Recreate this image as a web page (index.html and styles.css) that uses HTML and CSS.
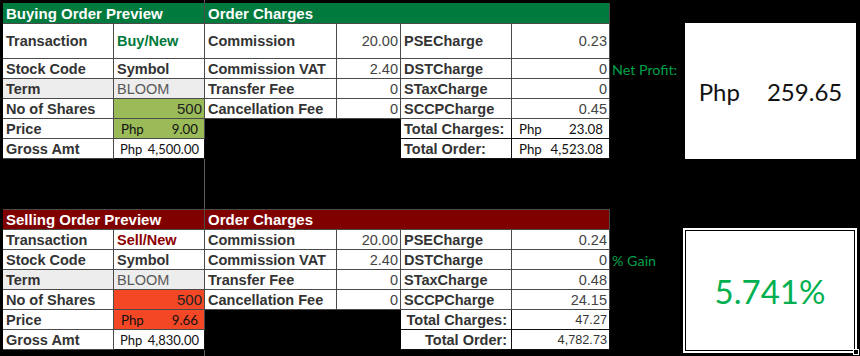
FILE: index.html
```html
<!DOCTYPE html>
<html>
<head>
<meta charset="utf-8">
<link rel="stylesheet" href="styles.css">
</head>
<body>
<div class="sheet">
  <div class="block buy">
    <div class="c hdr span2">Buying Order Preview</div>
    <div class="c hdr span4">Order Charges</div>
    <div class="blank span2"></div>

    <div class="c lbl">Transaction</div>
    <div class="c lbl buy-txt">Buy/New</div>
    <div class="c lbl">Commission</div>
    <div class="c num">20.00</div>
    <div class="c lbl">PSECharge</div>
    <div class="c num">0.23</div>
    <div class="blank"></div>
    <div class="result"><span>Php</span><span>259.65</span></div>

    <div class="c lbl">Stock Code</div>
    <div class="c lbl">Symbol</div>
    <div class="c lbl">Commission VAT</div>
    <div class="c num">2.40</div>
    <div class="c lbl">DSTCharge</div>
    <div class="c num">0</div>
    <div class="note">Net Profit:</div>

    <div class="c lbl grey">Term</div>
    <div class="c plain grey">BLOOM</div>
    <div class="c lbl">Transfer Fee</div>
    <div class="c num">0</div>
    <div class="c lbl">STaxCharge</div>
    <div class="c num">0</div>
    <div class="blank"></div>

    <div class="c lbl">No of Shares</div>
    <div class="c num fill-g dark-txt">500</div>
    <div class="c lbl">Cancellation Fee</div>
    <div class="c num">0</div>
    <div class="c lbl">SCCPCharge</div>
    <div class="c num">0.45</div>
    <div class="blank"></div>

    <div class="c lbl">Price</div>
    <div class="c acct fill-g"><span>Php</span><span>9.00</span></div>
    <div class="blank hole"></div>
    <div class="c lbl dark-b">Total Charges:</div>
    <div class="c acct dark-b"><span>Php</span><span>23.08</span></div>
    <div class="blank"></div>

    <div class="c lbl">Gross Amt</div>
    <div class="c acct tight dark-b"><span>Php</span><span>4,500.00</span></div>
    <div class="c lbl dark-b">Total Order:</div>
    <div class="c acct dark-b"><span>Php</span><span>4,523.08</span></div>
    <div class="blank"></div>
  </div>

  <div class="block sell">
    <div class="c hdr red span2">Selling Order Preview</div>
    <div class="c hdr red span4">Order Charges</div>
    <div class="blank span2"></div>

    <div class="c lbl">Transaction</div>
    <div class="c lbl sell-txt">Sell/New</div>
    <div class="c lbl">Commission</div>
    <div class="c num">20.00</div>
    <div class="c lbl">PSECharge</div>
    <div class="c num">0.24</div>
    <div class="blank"></div>
    <div class="result gain"><span>5.741%</span><i class="handle"></i></div>

    <div class="c lbl">Stock Code</div>
    <div class="c lbl">Symbol</div>
    <div class="c lbl">Commission VAT</div>
    <div class="c num">2.40</div>
    <div class="c lbl">DSTCharge</div>
    <div class="c num">0</div>
    <div class="note">% Gain</div>

    <div class="c lbl grey">Term</div>
    <div class="c plain grey">BLOOM</div>
    <div class="c lbl">Transfer Fee</div>
    <div class="c num">0</div>
    <div class="c lbl">STaxCharge</div>
    <div class="c num">0.48</div>
    <div class="blank"></div>

    <div class="c lbl">No of Shares</div>
    <div class="c num fill-r dark-txt">500</div>
    <div class="c lbl">Cancellation Fee</div>
    <div class="c num">0</div>
    <div class="c lbl">SCCPCharge</div>
    <div class="c num">24.15</div>
    <div class="blank"></div>

    <div class="c lbl">Price</div>
    <div class="c acct fill-r"><span>Php</span><span>9.66</span></div>
    <div class="blank hole"></div>
    <div class="c lbl right dark-b">Total Charges:</div>
    <div class="c num small dark-b">47.27</div>
    <div class="blank"></div>

    <div class="c lbl">Gross Amt</div>
    <div class="c acct tight dark-b"><span>Php</span><span>4,830.00</span></div>
    <div class="c lbl right dark-b">Total Order:</div>
    <div class="c num small dark-b">4,782.73</div>
    <div class="blank"></div>
  </div>
</div>
</body>
</html>
```
FILE: styles.css
```css
html, body {
  margin: 0;
  background: #000;
}

.sheet {
  box-sizing: border-box;
  min-height: 356px;
  padding: 3px 0 0 3px;
  display: flex;
  flex-direction: column;
  gap: 50px;
  background: linear-gradient(#5a5a5a, #5a5a5a) 204px 0 / 1px 100% no-repeat, #000;
}

.block {
  display: grid;
  grid-template-columns: 111px 91px 132px 64px 111px 98px 75px 171px;
}
.buy { grid-template-rows: 21px 35px repeat(5, 20px); }
.sell { grid-template-rows: 21px repeat(6, 20px); }

.span2 { grid-column: span 2; }
.span4 { grid-column: span 4; }
.hole { grid-column: span 2; grid-row: span 2; }

.c {
  box-sizing: border-box;
  border-right: 1px solid #4a4a4a;
  border-bottom: 1px solid #4a4a4a;
  background: #fff;
  font-family: "Liberation Sans", Arial, sans-serif;
  font-size: 14.5px;
  color: #333;
  padding: 0 3px;
  display: flex;
  align-items: center;
  white-space: nowrap;
  overflow: hidden;
}

.lbl { font-weight: bold; }
.plain { color: #595959; }
.num { justify-content: flex-end; color: #444; padding-right: 2px; }
.small { font-size: 12.7px; color: #333; }
.right { justify-content: flex-end; padding-right: 4px; }
.dark-txt { color: #222; font-size: 15px; }

.hdr {
  background: #007a3d;
  color: #fff;
  font-size: 15px;
  font-weight: bold;
  padding-left: 3px;
}
.hdr.red {
  background: #800000;
  border-top: 1px solid #4a4a4a;
}

.buy-txt { color: #00793a; }
.sell-txt { color: #8b0000; }
.grey { background: #ededed; }
.fill-g { background: #9bbb59; }
.fill-r { background: #f44725; }
.dark-b { border-color: #111; }

.acct {
  justify-content: space-between;
  font-family: Lato, "Open Sans", sans-serif;
  font-size: 13.3px;
  color: #111;
  padding: 0 6px 0 7px;
}
.acct.tight {
  font-size: 13px;
  padding: 0 5px 0 6px;
  gap: 4px;
}

.note {
  font-family: Lato, "Open Sans", sans-serif;
  font-size: 14.3px;
  color: #00a04a;
  padding-left: 2px;
  display: flex;
  align-items: center;
  white-space: nowrap;
}

.result {
  grid-column: 8;
  grid-row: 2 / span 6;
  margin-top: -1px;
  background: #fff;
  display: flex;
  align-items: center;
  justify-content: center;
  gap: 27px;
  font-family: Lato, "Open Sans", sans-serif;
  font-size: 24px;
  color: #111;
}

.result.gain {
  position: relative;
  margin: -2px -1px -3px -2px;
  border: 2px solid #fff;
  box-shadow: inset 0 0 0 1px #000;
  font-size: 33px;
  color: #00b050;
}

.handle {
  position: absolute;
  right: -4px;
  bottom: -4px;
  width: 4px;
  height: 4px;
  background: #000;
  border: 1px solid #fff;
}
```
